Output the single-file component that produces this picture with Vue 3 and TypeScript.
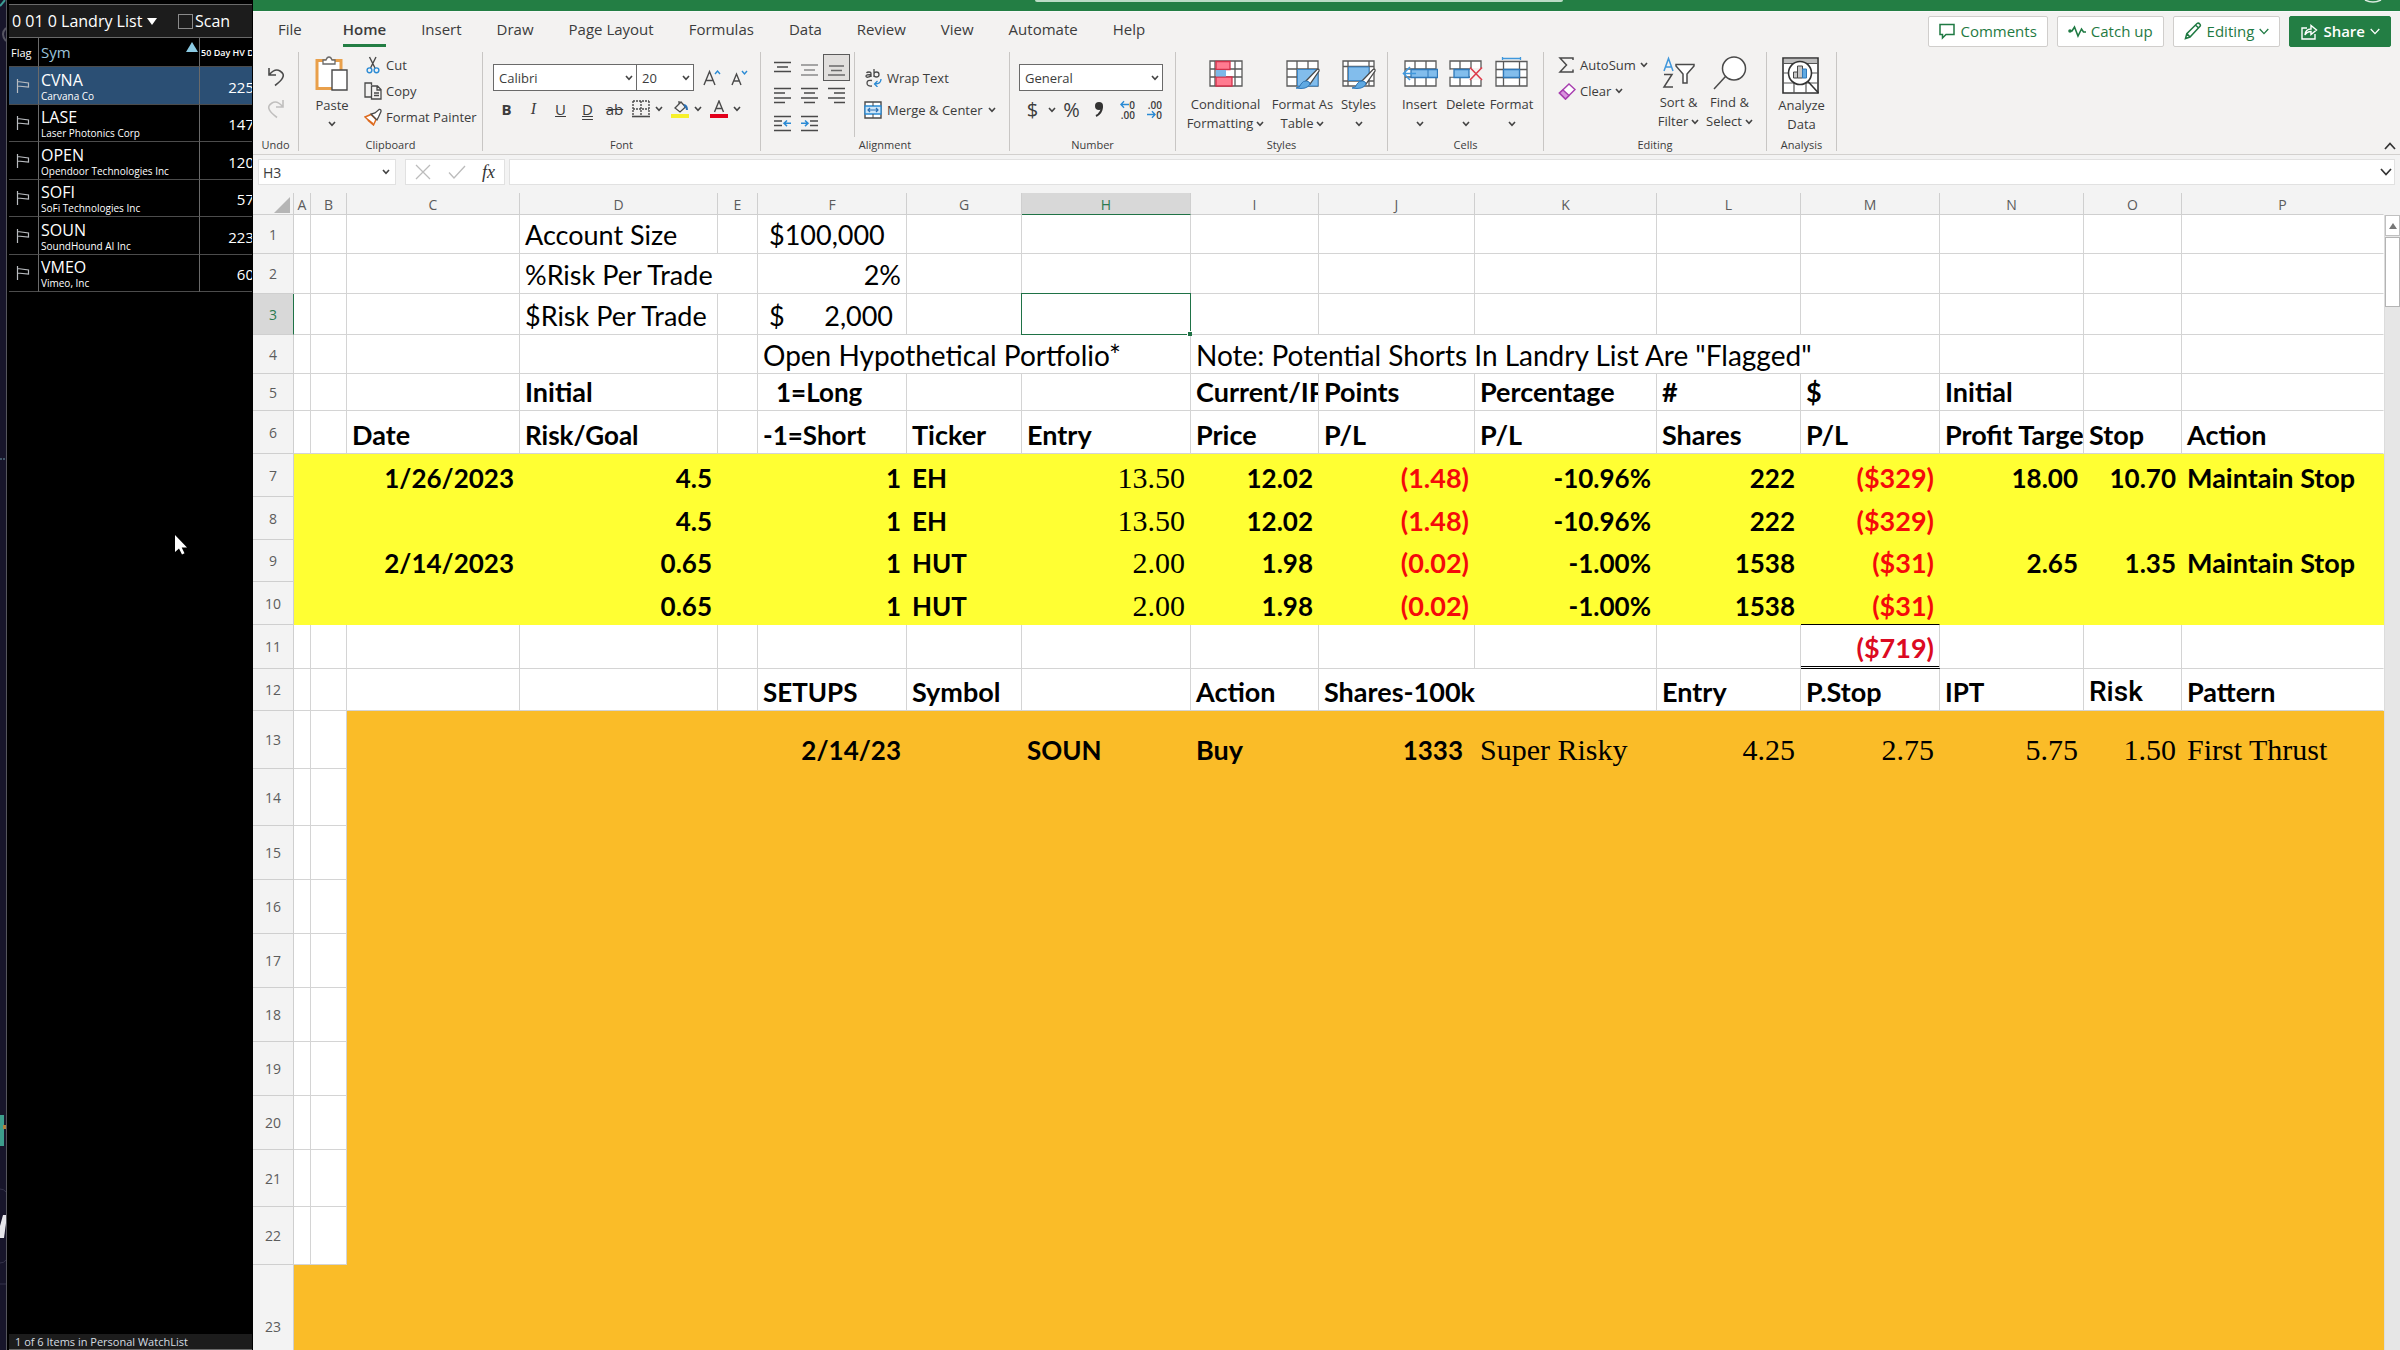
<script setup lang="ts">
import { h, ref } from 'vue'

interface Cell {
  t: string
  span?: number
  cls?: string
  currency?: string
}
interface Row {
  n: number
  height: number
  fill?: 'yellow' | 'orange'
  fillFrom?: number
  cells: Record<string, Cell>
}

const Chevron = () =>
  h('svg', { class: 'chev', viewBox: '0 0 8 6', width: 8, height: 6, 'aria-hidden': 'true' }, [
    h('path', { d: 'M1 1l3 3.4L7 1', fill: 'none', stroke: 'currentColor', 'stroke-width': 1.6 }),
  ])

const scan = ref(false)
const cellRef = ref('H3')
const formula = ref('')
const fontName = ref('Calibri')
const fontSize = ref('20')
const numberFormat = ref('General')

const watchlist = [
  { sym: 'CVNA', name: 'Carvana Co', hv: '225' },
  { sym: 'LASE', name: 'Laser Photonics Corp', hv: '147' },
  { sym: 'OPEN', name: 'Opendoor Technologies Inc', hv: '120' },
  { sym: 'SOFI', name: 'SoFi Technologies Inc', hv: '57' },
  { sym: 'SOUN', name: 'SoundHound AI Inc', hv: '223' },
  { sym: 'VMEO', name: 'Vimeo, Inc', hv: '60' },
]

const tabs = ['File', 'Home', 'Insert', 'Draw', 'Page Layout', 'Formulas', 'Data', 'Review', 'View', 'Automate', 'Help']

const columns = [
  { id: 'A', w: 17 }, { id: 'B', w: 36 }, { id: 'C', w: 173 }, { id: 'D', w: 198 },
  { id: 'E', w: 40 }, { id: 'F', w: 149 }, { id: 'G', w: 115 }, { id: 'H', w: 169 },
  { id: 'I', w: 128 }, { id: 'J', w: 156 }, { id: 'K', w: 182 }, { id: 'L', w: 144 },
  { id: 'M', w: 139 }, { id: 'N', w: 144 }, { id: 'O', w: 98 }, { id: 'P', w: 0 },
]

const b = (t: string, cls = ''): Cell => ({ t, cls: 'bold ' + cls })
const r = (t: string, cls = ''): Cell => ({ t, cls: 'bold right figure ' + cls })
const neg = (t: string, cls = ''): Cell => ({ t, cls: 'bold right red ' + cls })
const serif = (t: string, cls = ''): Cell => ({ t, cls: 'serif ' + cls })

const rows: Row[] = [
  { n: 1, height: 39, cells: { D: { t: 'Account Size' }, F: { t: '$100,000', cls: 'indent' } } },
  { n: 2, height: 40, cells: { D: { t: '%Risk Per Trade', span: 2 }, F: { t: '2%', cls: 'right' } } },
  { n: 3, height: 41, cells: { D: { t: '$Risk Per Trade' }, F: { t: '2,000', currency: '$', cls: 'indent' } } },
  {
    n: 4, height: 39,
    cells: {
      F: { t: 'Open Hypothetical Portfolio*', span: 3, cls: 'note' },
      I: { t: 'Note: Potential Shorts In Landry List Are "Flagged"', span: 5, cls: 'note' },
    },
  },
  {
    n: 5, height: 37,
    cells: {
      D: b('Initial'), F: b('1=Long', 'figure indent-2'), I: b('Current/IPT'), J: b('Points'),
      K: b('Percentage'), L: b('#'), M: b('$'), N: b('Initial'),
    },
  },
  {
    n: 6, height: 43,
    cells: {
      C: b('Date'), D: b('Risk/Goal', 'figure'), F: b('-1=Short', 'figure'), G: b('Ticker'), H: b('Entry'), I: b('Price'),
      J: b('P/L'), K: b('P/L'), L: b('Shares'), M: b('P/L'), N: b('Profit Target'), O: b('Stop'), P: b('Action'),
    },
  },
  {
    n: 7, height: 43, fill: 'yellow', fillFrom: 0,
    cells: {
      C: r('1/26/2023'), D: r('4.5'), F: r('1'), G: b('EH', 'figure'), H: serif('13.50', 'right'), I: r('12.02'),
      J: neg('(1.48)'), K: r('-10.96%'), L: r('222'), M: neg('($329)'), N: r('18.00'), O: r('10.70'),
      P: b('Maintain Stop'),
    },
  },
  {
    n: 8, height: 43, fill: 'yellow', fillFrom: 0,
    cells: {
      D: r('4.5'), F: r('1'), G: b('EH', 'figure'), H: serif('13.50', 'right'), I: r('12.02'),
      J: neg('(1.48)'), K: r('-10.96%'), L: r('222'), M: neg('($329)'),
    },
  },
  {
    n: 9, height: 42, fill: 'yellow', fillFrom: 0,
    cells: {
      C: r('2/14/2023'), D: r('0.65'), F: r('1'), G: b('HUT', 'figure'), H: serif('2.00', 'right'), I: r('1.98'),
      J: neg('(0.02)'), K: r('-1.00%'), L: r('1538'), M: neg('($31)'), N: r('2.65'), O: r('1.35'),
      P: b('Maintain Stop'),
    },
  },
  {
    n: 10, height: 43, fill: 'yellow', fillFrom: 0,
    cells: {
      D: r('0.65'), F: r('1'), G: b('HUT', 'figure'), H: serif('2.00', 'right'), I: r('1.98'),
      J: neg('(0.02)'), K: r('-1.00%'), L: r('1538'), M: neg('($31)', 'sum-top'),
    },
  },
  { n: 11, height: 44, cells: { M: neg('($719)', 'sum-total') } },
  {
    n: 12, height: 42,
    cells: {
      F: b('SETUPS', 'figure'), G: b('Symbol'), I: b('Action'), J: { t: 'Shares-100k', cls: 'bold', span: 2 },
      L: b('Entry'), M: b('P.Stop'), N: b('IPT', 'figure'), O: { t: 'Risk', cls: 'medium' }, P: b('Pattern'),
    },
  },
  {
    n: 13, height: 58, fill: 'orange', fillFrom: 2,
    cells: {
      F: r('2/14/23'), H: b('SOUN', 'figure'), I: b('Buy'), J: r('1333', 'inset'), K: serif('Super Risky'),
      L: serif('4.25', 'right'), M: serif('2.75', 'right'), N: serif('5.75', 'right'), O: serif('1.50', 'right'),
      P: serif('First Thrust'),
    },
  },
  ...[57, 54, 54, 54, 54, 54, 54, 57, 58].map((height, i): Row => ({
    n: 14 + i, height, fill: 'orange', fillFrom: 2, cells: {},
  })),
  { n: 23, height: 124, fill: 'orange', fillFrom: 0, cells: {} },
]

function layout(row: Row) {
  const out: { id: string; cell?: Cell; cls: (string | undefined | false)[] }[] = []
  for (let i = 0; i < columns.length; i++) {
    const id = columns[i].id
    const cell = row.cells[id]
    out.push({
      id,
      cell,
      cls: [cell?.cls, row.fill && i >= (row.fillFrom ?? 0) && row.fill, row.n === 3 && id === 'H' && 'active'],
    })
    if (cell?.span) i += cell.span - 1
  }
  return out
}
</script>

<template>
  <div class="desktop">
    <svg class="edge" width="6" height="1350" aria-hidden="true">
      <path d="M0 6L5 0" stroke="#3b9c94" stroke-width="2" />
      <path d="M6 28Q0 34 6 41" fill="none" stroke="#565562" stroke-width="2" />
      <path d="M0 459h6" stroke="#6f9aa6" stroke-dasharray="2 1" />
      <path d="M0 1115h4v31H0z" fill="#3d9e8c" />
      <path d="M3 1125h3v4H3z" fill="#b07f3c" />
      <path d="M0 1189q4 0 6 3M0 1263q4 0 6-3M0 1284h6" fill="none" stroke="#35334a" />
      <path d="M3 1215h3v8l-2 15H0v-12z" fill="#e6e6ea" />
    </svg>

    <aside class="watch">
      <header class="watch-title">
        <button class="list-name">0 01 0 Landry List
          <svg width="10" height="7" viewBox="0 0 10 7" aria-hidden="true"><path d="M0 0h10L5 7z" fill="#fff" /></svg>
        </button>
        <label class="scan"><input v-model="scan" type="checkbox">Scan</label>
      </header>
      <div class="watch-clip">
        <table class="watch-table">
          <thead>
            <tr>
              <th class="c-flag">Flag</th>
              <th class="c-sym">
                <div class="sym-head">Sym
                  <svg width="12" height="10" viewBox="0 0 12 10" aria-hidden="true"><path d="M6 0l6 10H0z" fill="#8ccbe4" /></svg>
                </div>
              </th>
              <th class="c-hv">50 Day HV D</th>
            </tr>
          </thead>
          <tbody>
            <tr v-for="(w, i) in watchlist" :key="w.sym" :class="{ selected: i === 0 }">
              <td class="c-flag">
                <svg width="14" height="16" viewBox="0 0 14 16" aria-hidden="true">
                  <path d="M1.5 1v14M1.5 3.5l11 1.500v4l-11-1" fill="none" stroke="#b9bcc0" stroke-width="1.200" />
                </svg>
              </td>
              <td class="c-sym"><b>{{ w.sym }}</b><small>{{ w.name }}</small></td>
              <td class="c-hv">{{ w.hv }}</td>
            </tr>
          </tbody>
        </table>
      </div>
      <footer class="watch-foot">1 of 6 Items in Personal WatchList</footer>
      <svg class="pointer" width="14" height="22" viewBox="0 0 14 22" aria-hidden="true">
        <path d="M1 1v17l4-3.500 3 6 2.500-1.200L7.700 13.500H13z" fill="#fff" />
      </svg>
    </aside>

    <main class="excel">
      <div class="titlebar">
        <span class="search-edge"></span>
        <svg class="avatar" width="18" height="3" viewBox="0 0 18 3" aria-hidden="true"><path d="M1 0q8 4 16 0" fill="none" stroke="#dcebe1" stroke-width="1.500" /></svg>
      </div>

      <nav class="tabs">
        <button v-for="t in tabs" :key="t" :class="{ on: t === 'Home' }">{{ t }}</button>
        <div class="actions">
          <button class="act">
            <svg width="16" height="17" viewBox="0 0 16 17" fill="none" stroke="#1f7a43" stroke-width="1.500"><path d="M1 1.500h14v10H7L3.500 15v-3.500H1z" /></svg>
            Comments
          </button>
          <button class="act">
            <svg width="18" height="16" viewBox="0 0 18 16" fill="none" stroke="#1f7a43" stroke-width="1.600"><path d="M1 8h3l2.500-4L10 13l3.500-7 2 3H18" /><circle cx="2" cy="8" r="1" /></svg>
            Catch up
          </button>
          <button class="act">
            <svg width="18" height="18" viewBox="0 0 18 18" fill="none" stroke="#1f7a43" stroke-width="1.500"><path d="M1.500 16.500l1.300-4.800L13 1.500q1.500-1 2.800.500 1.200 1.300 0 2.600L6 15zM11.500 3l3.300 3.200M3 11.800L6 15" /></svg>
            Editing
            <svg width="10" height="7" viewBox="0 0 10 7" fill="none" stroke="#1f7a43" stroke-width="1.300"><path d="M.700 1L5 5.600 9.300 1" /></svg>
          </button>
          <button class="act share">
            <svg width="18" height="18" viewBox="0 0 18 18" fill="none" stroke="#fff" stroke-width="1.400"><path d="M7 6H2v11h13v-5M5 13q.500-6 6-6V3.500L16.500 8 11 12.500V9.500Q7 9.500 5 13z" /></svg>
            Share
            <svg width="10" height="7" viewBox="0 0 10 7" fill="none" stroke="#fff" stroke-width="1.300"><path d="M.700 1L5 5.600 9.300 1" /></svg>
          </button>
        </div>
      </nav>

      <div class="ribbon">
        <section class="group g-undo">
          <div class="body undo">
            <button aria-label="Undo"><svg width="18" height="21" viewBox="0 0 18 21" fill="none" stroke="#4a4a4a" stroke-width="1.600"><path d="M2 2v7h7M2.500 8.500Q8 2 13 5t2.500 7Q14 15 8 19.500" /></svg></button>
            <button aria-label="Redo"><svg width="18" height="21" viewBox="0 0 18 21" fill="none" stroke="#c0bfbe" stroke-width="1.600"><path d="M16 2v7H9M15.500 8.500Q10 2 5 5t-2.500 7Q4 15 10 19.500" /></svg></button>
          </div>
          <h2>Undo</h2>
        </section>

        <section class="group g-clip">
          <div class="body clip">
            <button class="big">
              <svg width="34" height="36" viewBox="0 0 34 36" fill="none"><path d="M2 4.500h24v28H2z" fill="#fff" stroke="#e9a04b" stroke-width="3" /><path d="M8 8V4h3q1-3 3-3t3 3h3v4z" fill="#fff" stroke="#6a6a6a" stroke-width="1.300" /><path d="M17 14h15v20H17z" fill="#fff" stroke="#4a4a4a" stroke-width="1.400" /></svg>
              <span>Paste</span><Chevron />
            </button>
            <div class="stack">
              <button>
                <svg width="18" height="18" viewBox="0 0 18 18" fill="none"><path d="M5.500 1l5.500 11M12 1L6.500 12" stroke="#4a4a4a" stroke-width="1.400" /><circle cx="5.500" cy="14.300" r="2.400" stroke="#2a8ad4" stroke-width="1.400" /><circle cx="12.500" cy="14.300" r="2.400" stroke="#2a8ad4" stroke-width="1.400" /></svg>
                Cut
              </button>
              <button>
                <svg width="18" height="18" viewBox="0 0 18 18" fill="none" stroke="#4a4a4a" stroke-width="1.300"><path d="M7 15H1V1h6.500v2" /><path d="M7.500 4h6l3.500 3.500V17H7.500zM13 4v4h4M10 11h5M10 13.500h5" /></svg>
                Copy
              </button>
              <button>
                <svg width="18" height="18" viewBox="0 0 18 18" fill="none"><path d="M1 9l6-2.500 5 5L9.500 17z" fill="#fff" stroke="#dd6b20" stroke-width="1.500" /><path d="M4 12l5 4" stroke="#dd6b20" stroke-width="2" /><path d="M7 6l6 6 1.500-3L17 3.500Q17.300 1 15 1.500L11 5z" fill="#fff" stroke="#4a4a4a" stroke-width="1.300" /></svg>
                Format Painter
              </button>
            </div>
          </div>
          <h2>Clipboard</h2>
        </section>

        <section class="group g-font">
          <div class="body font">
            <div class="line">
              <span class="sel name"><select v-model="fontName" aria-label="Font name"><option>Calibri</option></select><Chevron /></span>
              <span class="sel size"><select v-model="fontSize" aria-label="Font size"><option>20</option></select><Chevron /></span>
              <button class="grow" aria-label="Increase font size"><svg width="18" height="18" viewBox="0 0 18 18" fill="none"><path d="M1 16L6.500 2.500 12 16M3 11.500h7.500" stroke="#4a4a4a" stroke-width="1.400" /><path d="M12 5l2.500-3L17 5" stroke="#2a8ad4" stroke-width="1.400" /></svg></button>
              <button class="grow" aria-label="Decrease font size"><svg width="18" height="18" viewBox="0 0 18 18" fill="none"><path d="M2 16L6.500 5 11 16M3.500 12h6" stroke="#4a4a4a" stroke-width="1.400" /><path d="M12 2l2.500 3L17 2" stroke="#2a8ad4" stroke-width="1.400" /></svg></button>
            </div>
            <div class="line marks">
              <button class="m"><b>B</b></button>
              <button class="m"><i>I</i></button>
              <button class="m"><u>U</u></button>
              <button class="m dbl">D</button>
              <button class="m"><s>ab</s></button>
              <button class="m pair" aria-label="Borders">
                <svg width="18" height="18" viewBox="0 0 18 18" fill="none" stroke="#4a4a4a"><path d="M1 1h16M1 1v15M17 1v15M9 1v15M1 9h16" stroke-width="1.400" stroke-dasharray="2 1" /><path d="M0 16.500h18" stroke-width="1.600" /></svg>
                <Chevron />
              </button>
              <button class="m pair" aria-label="Fill colour">
                <svg width="18" height="18" viewBox="0 0 18 18" fill="none"><path d="M0 14h18v4H0z" fill="#f7f02a" /><path d="M4 8l6-6 4.500 5-5.500 5zM8 4V1" stroke="#4a4a4a" stroke-width="1.300" /><path d="M13 5q3 1 3 5" stroke="#2a6fb4" stroke-width="2" /></svg>
                <Chevron />
              </button>
              <button class="m pair" aria-label="Font colour">
                <svg width="18" height="18" viewBox="0 0 18 18" fill="none"><path d="M0 14h18v4H0z" fill="#e3001b" /><path d="M4.500 12L9 1l4.500 11M6 8.500h6" stroke="#4a4a4a" stroke-width="1.400" /></svg>
                <Chevron />
              </button>
            </div>
          </div>
          <h2>Font</h2>
        </section>

        <section class="group g-align">
          <div class="body align">
            <div class="aligns">
              <button aria-label="Top align"><svg width="17" height="17" viewBox="0 0 17 17" stroke="#4a4a4a" stroke-width="1.500"><path d="M0 3.500h17M3 8h11M0 12.500h17" /></svg></button>
              <button aria-label="Middle align"><svg width="17" height="17" viewBox="0 0 17 17" stroke="#8a8a8a" stroke-width="1.500"><path d="M0 6h17M3 11h11M0 16h17" /></svg></button>
              <button class="on" aria-label="Bottom align"><svg width="17" height="17" viewBox="0 0 17 17" stroke="#6a6a6a" stroke-width="1.500"><path d="M1 7h15M3 11.500h11M0 16h17" /></svg></button>
              <button aria-label="Align left"><svg width="17" height="17" viewBox="0 0 17 17" stroke="#4a4a4a" stroke-width="1.500"><path d="M0 1.500h17M0 6h11M0 11h17M0 15.500h11" /></svg></button>
              <button aria-label="Centre"><svg width="17" height="17" viewBox="0 0 17 17" stroke="#4a4a4a" stroke-width="1.500"><path d="M0 1.500h17M3 6h11M0 11h17M3 15.500h11" /></svg></button>
              <button aria-label="Align right"><svg width="17" height="17" viewBox="0 0 17 17" stroke="#4a4a4a" stroke-width="1.500"><path d="M0 1.500h17M6 6h11M0 11h17M6 15.500h11" /></svg></button>
              <button aria-label="Decrease indent"><svg width="17" height="17" viewBox="0 0 17 17" fill="none" stroke="#4a4a4a" stroke-width="1.500"><path d="M0 1.500h17M0 6h8M0 10.500h8M0 15.500h17" /><path d="M10 8.300h7M13 5.500l-3 2.800 3 2.800" stroke="#2a8ad4" /></svg></button>
              <button aria-label="Increase indent"><svg width="17" height="17" viewBox="0 0 17 17" fill="none" stroke="#4a4a4a" stroke-width="1.500"><path d="M0 1.500h17M9 6h8M9 10.500h8M0 15.500h17" /><path d="M0 8.300h7M4 5.500l3 2.800-3 2.800" stroke="#2a8ad4" /></svg></button>
            </div>
            <div class="wraps">
              <button>
                <svg width="18" height="18" viewBox="0 0 18 18" fill="none" stroke="#4a4a4a" stroke-width="1.300"><path d="M7 8V4.500Q7 3 5 3T2.500 4M7 5.500Q2 5.500 2 7t2 1.200T7 6.500M10 0v8M10 5q0-2 2.500-2T15 5.500 12.500 8 10 6M8 11.500Q3 10.500 3 14t5 3" /><path d="M17 10q0 5-6 5M13.500 12L10.500 15l3 3" stroke="#2a8ad4" /></svg>
                Wrap Text
              </button>
              <button>
                <svg width="18" height="18" viewBox="0 0 18 18" fill="none"><path d="M1 1h16v16H1z" fill="#fff" stroke="#4a4a4a" stroke-width="1.400" /><path d="M1 5h16v8H1z" fill="#cfe6f7" stroke="#2a8ad4" stroke-width="1.300" /><path d="M9 1v4M9 13v4" stroke="#4a4a4a" /><path d="M4 9h10M6 7L4 9l2 2M12 7l2 2-2 2" stroke="#2a6fb4" stroke-width="1.200" /></svg>
                Merge &amp; Center <Chevron />
              </button>
            </div>
          </div>
          <h2>Alignment</h2>
        </section>

        <section class="group g-num">
          <div class="body num">
            <span class="sel fmt"><select v-model="numberFormat" aria-label="Number format"><option>General</option></select><Chevron /></span>
            <div class="line nums">
              <button class="n">$</button><button class="n tiny" aria-label="Currency options"><Chevron /></button><button class="n">%</button>
              <button class="n" aria-label="Comma style"><svg width="10" height="17" viewBox="0 0 10 17"><circle cx="5" cy="5" r="4" fill="#333" /><path d="M8 5q0 7-6 10" fill="none" stroke="#333" stroke-width="2" /></svg></button>
              <button class="n dec" aria-label="Increase decimal"><span><svg width="9" height="9" viewBox="0 0 10 9" fill="none" stroke="#2a8ad4" stroke-width="1.500"><path d="M1 4.500h9M4.500 1L1 4.500 4.500 8" /></svg>0</span><span>.00</span></button>
              <button class="n dec" aria-label="Decrease decimal"><span>.00</span><span><svg width="9" height="9" viewBox="0 0 10 9" fill="none" stroke="#2a8ad4" stroke-width="1.500"><path d="M0 4.500h9M5.500 1L9 4.500 5.500 8" /></svg>0</span></button>
            </div>
          </div>
          <h2>Number</h2>
        </section>

        <section class="group g-styles">
          <div class="body bigs">
            <button class="big w-cf">
              <svg width="34" height="32" viewBox="0 0 34 32" fill="none"><path d="M1 4h32v25H1zM1 12h32M1 20h32M6 4v25M26 4v25" fill="#fff" stroke="#5a5a5a" stroke-width="1.300" /><path d="M7 4.500h14v8H7zM7 20h16v9H7z" fill="#ff7b90" stroke="#d2324b" stroke-width="1.300" /><path d="M7 13h10v6.500H7z" fill="#7db8e8" /></svg>
              <span>Conditional</span><span>Formatting<Chevron /></span>
            </button>
            <button class="big w-fat">
              <svg width="34" height="32" viewBox="0 0 34 32" fill="none"><path d="M1 4h31v25H1zM1 12h31M1 20h31M11 4v25M22 4v25" fill="#fff" stroke="#5a5a5a" stroke-width="1.300" /><path d="M11.500 12.500H32V29H11.500z" fill="#82bdec" stroke="#3a86c8" /><path d="M20 24L31 12.500q2.500-1 2 1.500L24 27z" fill="#fff" stroke="#4a4a4a" stroke-width="1.300" /><path d="M10 31q4 0 5-4 2-3.500 5.500-3T24 27q-3 6-14 4z" fill="#5fa9e2" stroke="#2f78b8" /></svg>
              <span>Format As</span><span>Table<Chevron /></span>
            </button>
            <button class="big w-sty">
              <svg width="34" height="32" viewBox="0 0 34 32" fill="none"><path d="M1 4h31v25H1zM1 9.500h31M1 24h31M6 4v25M27 4v25" fill="#fff" stroke="#5a5a5a" stroke-width="1.300" /><path d="M6.500 10H27v13.500H6.500z" fill="#82bdec" stroke="#3a86c8" /><path d="M20 24L31 12.500q2.500-1 2 1.500L24 27z" fill="#fff" stroke="#4a4a4a" stroke-width="1.300" /><path d="M10 31q4 0 5-4 2-3.500 5.500-3T24 27q-3 6-14 4z" fill="#5fa9e2" stroke="#2f78b8" /></svg>
              <span>Styles</span><span><Chevron /></span>
            </button>
          </div>
          <h2>Styles</h2>
        </section>

        <section class="group g-cells">
          <div class="body bigs">
            <button class="big w-cell">
              <svg width="36" height="32" viewBox="0 0 36 32" fill="none"><path d="M3 4h31v25H3zM3 12h31M3 20h31M13 4v25M24 4v25" fill="#fff" stroke="#5a5a5a" stroke-width="1.300" /><path d="M9 12.500h26.500v8H9z" fill="#82bdec" stroke="#2f78b8" stroke-width="1.300" /><path d="M26 12v8" stroke="#2f78b8" /><path d="M14 16.500H1.500M8 10l-6.500 6.500L8 23" stroke="#3f97dc" stroke-width="1.600" /></svg>
              <span>Insert</span><span><Chevron /></span>
            </button>
            <button class="big w-cell">
              <svg width="34" height="32" viewBox="0 0 34 32" fill="none"><path d="M1 4h31v25H1zM1 12h31M1 20h31M11 4v25M22 4v25" fill="#fff" stroke="#5a5a5a" stroke-width="1.300" /><path d="M0 12.700h5v7H0z" fill="#f3f2f1" /><path d="M5 12.500h15v8H5z" fill="#82bdec" stroke="#2f78b8" stroke-width="1.300" /><path d="M21 11h12v12H21z" fill="#f3f2f1" /><path d="M21 10.500l12 12.500M33 10.500L21 23" stroke="#dd3a4a" stroke-width="1.600" /></svg>
              <span>Delete</span><span><Chevron /></span>
            </button>
            <button class="big w-cell">
              <svg width="34" height="32" viewBox="0 0 34 32" fill="none"><path d="M1 4.500h31V29H1zM1 12.500h31M1 20.500h31M8.500 4.500V29M24.500 4.500V29" fill="#fff" stroke="#5a5a5a" stroke-width="1.300" /><path d="M8.500 12.500h16v8h-16z" fill="#82bdec" stroke="#2f78b8" stroke-width="1.300" /><path d="M7.500 1.500h18M7.500 0v3M25.500 0v3" stroke="#3f97dc" stroke-width="1.300" /></svg>
              <span>Format</span><span><Chevron /></span>
            </button>
          </div>
          <h2>Cells</h2>
        </section>

        <section class="group g-edit">
          <div class="body editing">
            <div class="stack">
              <button>
                <svg width="18" height="18" viewBox="0 0 18 18" fill="none" stroke="#4a4a4a" stroke-width="1.500"><path d="M15 4V2H2l6.500 7L2 16h13v-2.500" /></svg>
                AutoSum <Chevron />
              </button>
              <button>
                <svg width="18" height="18" viewBox="0 0 18 18" fill="none" stroke="#a83fb0" stroke-width="1.500"><path d="M11 2l6 5.500L7.500 17 1.500 11z" fill="#fff" /><path d="M5 8l6 5.500L7.500 17l-6-6z" fill="#d893dd" /></svg>
                Clear <Chevron />
              </button>
            </div>
            <button class="big w-sort">
              <svg width="34" height="34" viewBox="0 0 34 34" fill="none"><path d="M2 15L6.500 2.500 11 15M3.500 11h6" stroke="#3f97dc" stroke-width="1.500" /><path d="M2 18.500h8L2 31h9" stroke="#4a4a4a" stroke-width="1.500" /><path d="M14 8.500h18V10l-7 8v9h-4v-9l-7-8z" fill="#fff" stroke="#4a4a4a" stroke-width="1.500" /></svg>
              <span>Sort &amp;</span><span>Filter<Chevron /></span>
            </button>
            <button class="big w-sort">
              <svg width="34" height="34" viewBox="0 0 34 34" fill="none" stroke="#4a4a4a" stroke-width="1.500"><circle cx="21" cy="12.500" r="11.500" fill="#fff" /><path d="M12.500 20.500L1 33" /></svg>
              <span>Find &amp;</span><span>Select<Chevron /></span>
            </button>
          </div>
          <h2>Editing</h2>
        </section>

        <section class="group g-anal">
          <div class="body bigs">
            <button class="big">
              <svg width="38" height="38" viewBox="0 0 38 38" fill="none"><path d="M1 1h35v35H1z" fill="#fff" stroke="#333" stroke-width="1.600" /><path d="M2 2h33v4H2z" fill="#bdbdbd" /><path d="M1 6.500h35M1 16h35M1 26h35M12 26v10M24 26v10" stroke="#555" stroke-width="1.200" /><circle cx="18" cy="16" r="11.500" fill="#fff" stroke="#333" stroke-width="1.600" /><path d="M11.500 15h4v6h-4zM15.500 9h5v12h-5z" fill="#c8c8c8" stroke="#444" /><path d="M20.500 12h4v9h-4z" fill="#5fa9e2" stroke="#2f78b8" /><path d="M26 24.500L36.500 36" stroke="#333" stroke-width="1.600" /></svg>
              <span>Analyze</span><span>Data</span>
            </button>
          </div>
          <h2>Analysis</h2>
        </section>
        <button class="collapse" aria-label="Collapse ribbon"><svg width="12" height="8" viewBox="0 0 12 8" fill="none" stroke="#333" stroke-width="1.700"><path d="M1 7l5-5.500L11 7" /></svg></button>
      </div>

      <div class="formula-row">
        <div class="box namebox"><input v-model="cellRef" aria-label="Name box"><Chevron /></div>
        <div class="box fx">
          <button aria-label="Cancel"><svg width="16" height="16" viewBox="0 0 16 16" stroke="#bcbcbc" stroke-width="1.300"><path d="M1 1l14 14M15 1L1 15" /></svg></button>
          <button aria-label="Enter"><svg width="18" height="14" viewBox="0 0 18 14" fill="none" stroke="#bcbcbc" stroke-width="1.300"><path d="M1 7.500L6 13 17 1" /></svg></button>
          <button class="fx-label">fx</button>
        </div>
        <div class="box formula">
          <input v-model="formula" aria-label="Formula bar">
          <svg width="12" height="8" viewBox="0 0 12 8" fill="none" stroke="#333" stroke-width="1.700" aria-hidden="true"><path d="M1 1l5 5.500L11 1" /></svg>
        </div>
      </div>

      <div class="sheet">
        <table class="grid">
          <colgroup>
            <col class="rowhead">
            <col v-for="c in columns" :key="c.id" :style="c.w ? { width: c.w + 'px' } : undefined">
          </colgroup>
          <thead>
            <tr>
              <th class="corner"><svg width="16" height="16" viewBox="0 0 16 16" aria-hidden="true"><path d="M16 0v16H0z" fill="#b5b5b5" /></svg></th>
              <th v-for="c in columns" :key="c.id" scope="col" :class="{ cur: c.id === 'H' }">{{ c.id }}</th>
            </tr>
          </thead>
          <tbody>
            <tr v-for="row in rows" :key="row.n" :style="{ height: row.height + 'px' }">
              <th scope="row" :class="{ cur: row.n === 3 }">{{ row.n }}</th>
              <td v-for="c in layout(row)" :key="c.id" :colspan="c.cell?.span" :class="c.cls">
                <div v-if="c.cell?.currency" class="accounting"><span>{{ c.cell.currency }}</span><span>{{ c.cell.t }}</span></div>
                <template v-else>{{ c.cell?.t }}</template>
              </td>
            </tr>
          </tbody>
        </table>
        <div class="scroll">
          <button aria-label="Scroll up"><svg width="8" height="6" viewBox="0 0 8 6"><path d="M4 0l4 6H0z" fill="#777" /></svg></button>
          <div class="thumb"></div>
        </div>
      </div>
    </main>
  </div>
</template>

<style>
body {
  margin: 0;
  background: #000;
}
</style>

<style scoped>
.desktop {
  display: flex;
  height: 100vh;
  overflow: hidden;
  position: relative;
  font-family: "Open Sans", "Noto Sans", sans-serif;
  font-size: 13px;
  color: #3c3c3c;
}
* { box-sizing: border-box; }
button, input, select {
  font: inherit;
  color: inherit;
  background: none;
  border: 0;
  padding: 0;
  margin: 0;
  border-radius: 0;
  outline: 0;
}
svg { flex: none; display: block; }

/* window edge and watch list */
.edge { background: #17152a; height: 100vh; }
.watch {
  width: 247px;
  flex: none;
  background: #000;
  border-left: 1px solid #55555c;
  padding: 4px 1px 0 2px;
  display: flex;
  flex-direction: column;
  color: #fff;
}
.watch-title {
  height: 34px;
  flex: none;
  background: #1c1c1c;
  border-top: 1px solid #6a6a6a;
  border-bottom: 1px solid #6a6a6a;
  display: flex;
  align-items: center;
  padding-left: 3px;
  font-size: 16px;
  white-space: nowrap;
}
.list-name { display: flex; align-items: center; gap: 5px; width: 166px; }
.scan { display: flex; align-items: center; gap: 2px; }
.scan input { appearance: none; width: 15px; height: 15px; border: 1px solid #8a8a8a; }
.watch-clip { flex: 1; overflow: hidden; }
.watch-table { width: 249px; table-layout: fixed; border-collapse: separate; border-spacing: 0; }
.watch-table thead tr { height: 29px; }
.watch-table tbody tr { height: 37px; }
.watch-table tbody tr:nth-child(odd) { height: 38px; }
.watch-table th, .watch-table td {
  padding: 0;
  border-bottom: 1px solid #4c4c4c;
  border-right: 1px solid #6a6a6a;
  font-weight: 400;
  text-align: left;
  overflow: hidden;
  white-space: nowrap;
}
.watch-table .c-flag { width: 30px; padding-left: 2px; font-size: 11px; }
.watch-table td.c-flag { padding-left: 7px; }
.watch-table .c-sym { width: 161px; padding-left: 2px; font-size: 15px; }
.watch-table th.c-sym { color: #9cc4dc; }
.watch-table th.c-hv { font-size: 9px; font-weight: 600; padding-left: 1px; }
.watch-table td.c-hv { font-size: 15px; text-align: right; padding-right: 3px; padding-top: 2px; }
.sym-head { display: flex; justify-content: space-between; align-items: flex-start; padding-right: 1px; }
.c-sym b { display: block; font-weight: 400; font-size: 16px; line-height: 18px; padding-top: 3px; }
.c-sym small { display: block; font-size: 10px; line-height: 15px; }
.selected td { background: #2b4f74; }
.watch-foot {
  height: 16px;
  flex: none;
  background: #1c1c1c;
  border-bottom: 1px solid #6a6a6a;
  padding-left: 6px;
  font-size: 11px;
  line-height: 15px;
  color: #d5dde2;
}
.pointer { position: absolute; left: 174px; top: 534px; }

/* workbook */
.excel { flex: 1; min-width: 0; display: flex; flex-direction: column; background: #f3f2f1; }
.titlebar { height: 12px; flex: none; background: #237e44; border-bottom: 1px solid #f8f8f8; display: flex; justify-content: center; position: relative; }
.search-edge { width: 528px; height: 2px; background: #bcdcc6; border-radius: 0 0 3px 3px; margin-right: 56px; }
.avatar { position: absolute; right: 18px; top: 0; }
.tabs { height: 36px; flex: none; display: flex; align-items: center; gap: 35px; padding: 0 9px 0 25px; font-size: 15px; }
.tabs > button { height: 34px; white-space: nowrap; border-bottom: 3px solid transparent; }
.tabs > button:first-child { margin-right: 6px; }
.tabs > .on { font-weight: 600; border-color: #237e44; }
.actions { margin-left: auto; display: flex; gap: 9px; padding-top: 2px; }
.act {
  height: 31px;
  background: #fff;
  border: 1px solid #d0cecc;
  border-radius: 2px;
  color: #1f7a43;
  padding: 0 10px;
  display: flex;
  align-items: center;
  gap: 5px;
  white-space: nowrap;
  font-size: 15px;
}
.share { background: #237e44; border-color: #237e44; color: #fff; font-weight: 600; }

.ribbon {
  height: 107px;
  flex: none;
  display: flex;
  padding-top: 4px;
  border-bottom: 1px solid #d2d0ce;
  position: relative;
}
.group { height: 99px; flex: none; display: flex; flex-direction: column; border-right: 1px solid #c8c6c4; }
.group h2 { margin: 0; font-size: 11px; font-weight: 400; line-height: 12px; text-align: center; }
.body { flex: 1; display: flex; }
.g-undo { width: 46px; }
.g-clip { width: 184px; }
.g-font { width: 278px; }
.g-align { width: 249px; }
.g-num { width: 166px; }
.g-styles { width: 212px; }
.g-cells { width: 156px; }
.g-edit { width: 223px; }
.g-anal { width: 70px; }
.undo { flex-direction: column; align-items: center; gap: 11px; padding-top: 14px; }
.stack { display: flex; flex-direction: column; }
.stack button { height: 26px; display: flex; align-items: center; gap: 4px; white-space: nowrap; }
.clip { padding-left: 16px; gap: 15px; }
.big { display: flex; flex-direction: column; align-items: center; padding-top: 4px; white-space: nowrap; line-height: 19px; }
.big > svg { margin-bottom: 4px; }
.big > svg.chev { margin-top: 6px; }
.big span { display: flex; align-items: center; gap: 3px; min-height: 19px; }
.chev { color: #444; }
.font { flex-direction: column; padding: 12px 0 0 10px; gap: 7px; }
.line { display: flex; align-items: center; }
.sel { position: relative; display: flex; height: 27px; background: #fff; border: 1px solid #6a6a6a; }
.sel select { appearance: none; width: 100%; padding-left: 5px; }
.sel .chev { position: absolute; right: 3px; top: 10px; pointer-events: none; }
.name { width: 144px; }
.size { width: 58px; margin-left: -1px; }
.grow { margin-left: 9px; }
.m { width: 27px; height: 22px; font-size: 15px; display: flex; align-items: center; justify-content: center; }
.m i { font-family: "Liberation Serif", serif; font-size: 16px; }
.dbl { text-decoration: underline double; }
.pair { width: 39px; gap: 5px; }
.align { padding-left: 8px; }
.aligns { display: grid; grid-template-columns: repeat(3, 27px); grid-template-rows: 27px 29px 27px; align-content: start; padding: 2px 4px 0 0; height: 85px; border-right: 1px solid #c8c6c4; }
.aligns button { display: flex; align-items: center; justify-content: center; }
.aligns .on { background: #e1dfdd; border: 1px solid #5a5a5a; }
.wraps { display: flex; flex-direction: column; gap: 5px; padding: 12px 0 0 9px; }
.wraps button { height: 27px; display: flex; align-items: center; gap: 5px; white-space: nowrap; }
.num { flex-direction: column; padding: 12px 0 0 9px; gap: 5px; }
.fmt { width: 144px; }
.nums { height: 27px; }
.n { width: 27px; font-size: 20px; display: flex; align-items: center; justify-content: center; }
.tiny { width: 12px; }
.dec { flex-direction: column; align-items: flex-end; font-size: 10px; line-height: 10px; font-weight: 600; padding-right: 4px; }
.dec span { display: flex; align-items: center; }
.bigs { justify-content: center; align-items: flex-start; padding-top: 1px; }
.bigs .big > svg { margin-bottom: 6px; }
.g-anal .big > svg { margin-bottom: 1px; }
.w-cf { width: 84px; }
.w-fat { width: 70px; }
.w-sty { width: 42px; }
.w-cell { width: 46px; }
.editing { padding-left: 14px; }
.editing .stack { width: 95px; }
.w-sort { width: 51px; }
.editing .big > svg { margin-bottom: 3px; }
.collapse { position: absolute; right: 4px; bottom: 4px; }

.formula-row { height: 38px; flex: none; display: flex; padding: 4px 5px 0; background: #f3f3f3; }
.box { height: 26px; background: #fff; border: 1px solid #e1e1e1; display: flex; align-items: center; }
.box input { flex: 1; min-width: 0; height: 100%; font-size: 14px; }
.namebox { width: 138px; padding: 0 5px 0 4px; margin-right: 9px; }
.fx { width: 100px; margin-right: 4px; padding: 0 9px; justify-content: space-between; }
.fx-label { font: italic 18px "Liberation Serif", serif; color: #333; }
.formula { flex: 1; padding: 0 2px 0 6px; }

.sheet { flex: 1; min-height: 0; display: flex; overflow: hidden; align-items: flex-start; background: #f3f3f3; }
.grid { flex: 1; min-width: 0; width: 100%; table-layout: fixed; border-collapse: separate; border-spacing: 0; }
.rowhead { width: 41px; }
.grid thead tr { height: 22px; }
.grid th {
  padding: 0;
  background: #f3f3f3;
  border-right: 1px solid #cfcfcf;
  border-bottom: 1px solid #cfcfcf;
  font-size: 14px;
  line-height: 19px;
  font-weight: 400;
  color: #5c5c5c;
  text-align: center;
}
.grid thead th { padding-top: 2px; }
.grid thead th:last-child { border-right-color: transparent; }
.grid .corner svg { margin-left: 21px; }
.grid th.cur { background: #d8d8d8; color: #2c7a50; }
.grid thead th.cur { border-bottom-color: #1f7246; }
.grid tbody th.cur { border-right-color: #1f7246; }
.grid td {
  padding: 0 5px 2px 5px;
  background: #fff;
  border-right: 1px solid #d4d4d4;
  border-bottom: 1px solid #d4d4d4;
  vertical-align: bottom;
  overflow: hidden;
  white-space: nowrap;
  font-family: Lato, "Open Sans", sans-serif;
  font-size: 27px;
  line-height: 32px;
  color: #000;
}
.grid td:last-child { border-right-color: transparent; }
.grid td.note { font-size: 28px; }
.grid td.bold { font-weight: 700; }
.grid td.figure { font-size: 26px; }
.grid td.right { text-align: right; }
.grid td.red { color: #f50a0a; }
.grid td.indent { padding-left: 11px; }
.grid td.indent-2 { padding-left: 18px; }
.grid td.inset { padding-right: 11px; }
.grid td.serif { font-family: "Liberation Serif", serif; font-size: 30px; }
.grid td.medium { font-family: Roboto, sans-serif; font-size: 28px; font-weight: 500; }
.grid td.yellow { background: #ffff33; border-color: #ffff33; }
.grid td.orange { background: #fabc28; border-color: #fabc28; }
.grid td.sum-top { border-bottom-color: #000; }
.grid td.sum-total { border-bottom: 3px double #000; color: #dc0a22; }
.grid td.active { position: relative; overflow: visible; }
.active::before { content: ""; position: absolute; inset: -1px; border: 1px solid #1f7246; }
.active::after { content: ""; position: absolute; right: -2px; bottom: -2px; width: 4px; height: 4px; background: #1f7246; border: solid #fff; box-sizing: content-box; border-width: 1px 0 0 1px; }
.accounting { display: flex; justify-content: space-between; padding-right: 8px; }
.scroll { width: 16px; flex: none; align-self: stretch; margin-top: 22px; background: #e6e6e6; border-left: 1px solid #dcdcdc; }
.scroll button { width: 100%; height: 21px; background: #fff; border: 1px solid #c0c0c0; display: flex; align-items: center; justify-content: center; }
.thumb { height: 70px; margin-top: 1px; background: #fff; border: 1px solid #b4b4b4; }
</style>
